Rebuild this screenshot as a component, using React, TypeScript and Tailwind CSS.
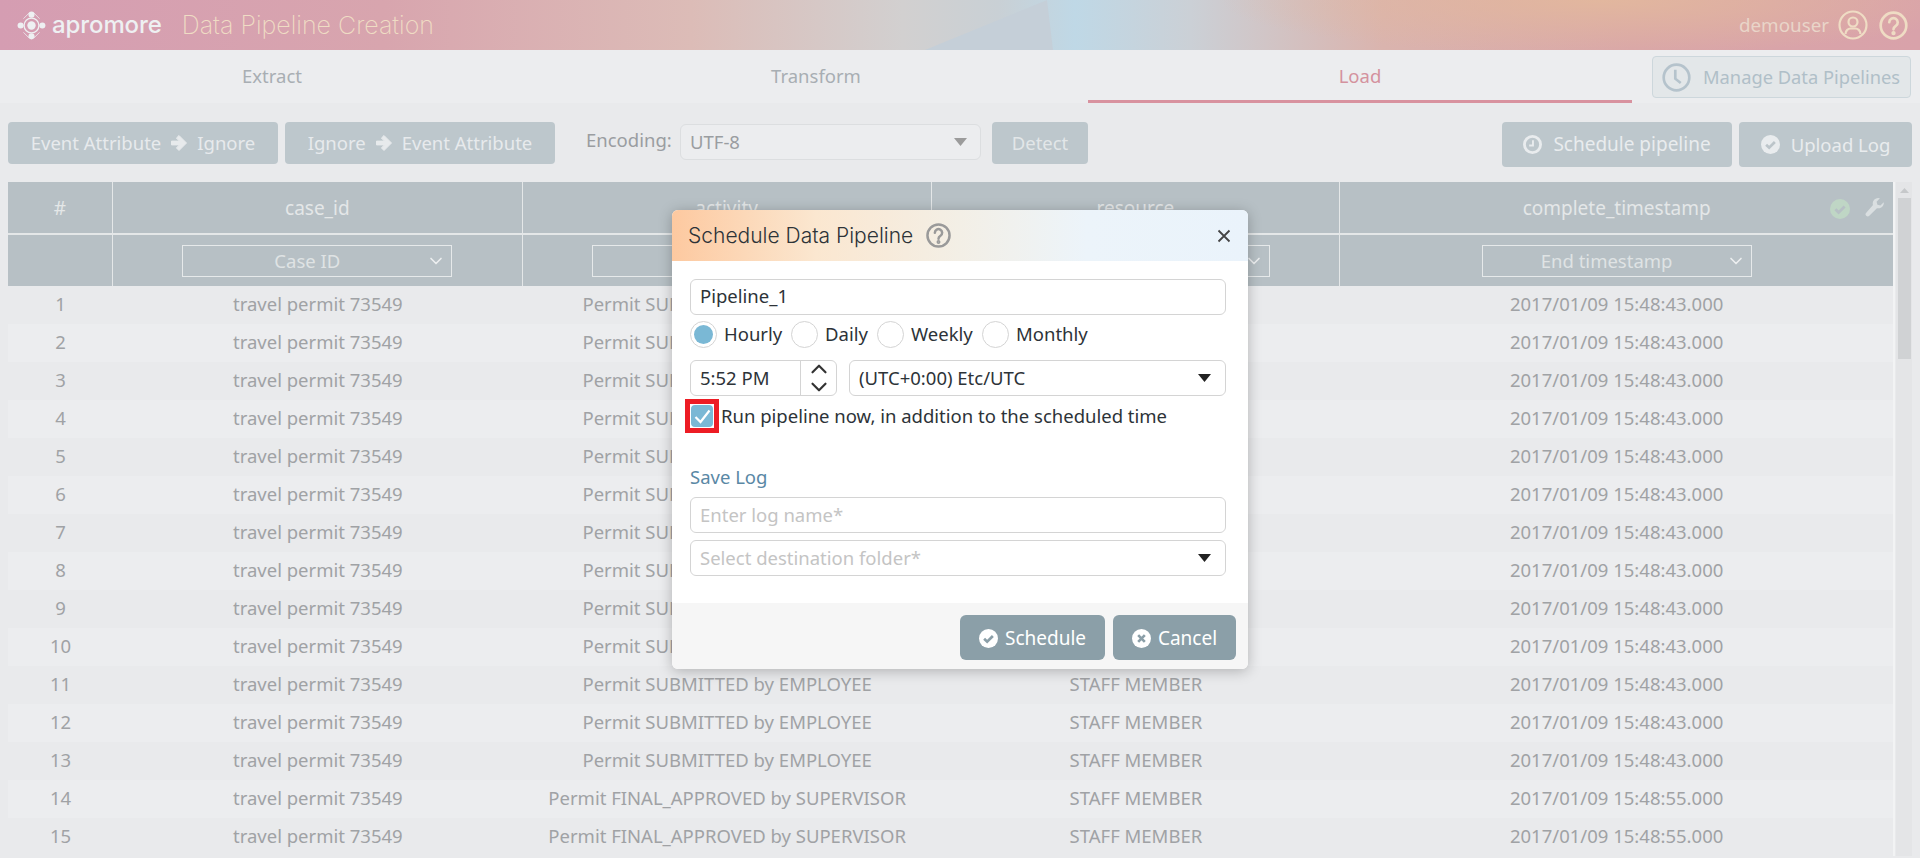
import React from "react";
import { ChevronDown, ChevronUp } from "lucide-react";

const FONT = "font-['Noto_Sans','Lato',sans-serif]";

function CircleCheck({ size = 18, check = "#bcc5ca", fill = "currentColor" }: { size?: number; check?: string; fill?: string }) {
  return (
    <svg width={size} height={size} viewBox="0 0 20 20" className="shrink-0">
      <circle cx="10" cy="10" r="10" fill={fill} />
      <path d="M5.400 10.200l3.200 3.200 6-6" fill="none" stroke={check} strokeWidth="2.800" />
    </svg>
  );
}

function Arrow() {
  return (
    <svg width="20" height="20" viewBox="0 0 20 20" className="shrink-0 mx-2">
      <path d="M10 2.500l7.500 7.500-7.500 7.500-2.600-2.600 3-3H2.500V8.100h7.900l-3-3z" fill="#e7eaec" stroke="#e7eaec" strokeLinejoin="round" />
    </svg>
  );
}

function Logo() {
  return (
    <svg width="37" height="37" viewBox="0 0 46 46" className="shrink-0">
      <g fill="#eef0f2">
        <circle cx="23" cy="23" r="5.200" />
        <circle cx="23" cy="9.500" r="3.800" />
        <circle cx="23" cy="36.500" r="3.800" />
        <circle cx="9.500" cy="23" r="3.800" />
        <circle cx="36.500" cy="23" r="3.800" />
      </g>
      <circle cx="23" cy="23" r="9.200" fill="none" stroke="#eef0f2" strokeWidth="1.600" />
      <path d="M13 14.500L20 7.500M33 14.500L26 7.500M13 31.500L20 38.500M33 31.500L26 38.500" stroke="#eef0f2" strokeWidth="1" fill="none" />
    </svg>
  );
}

function HelpIcon({ size, color, stroke = 2.2 }: { size: number; color: string; stroke?: number }) {
  return (
    <svg width={size} height={size} viewBox="0 0 24 24" fill="none" stroke={color} strokeWidth={stroke} className="shrink-0">
      <circle cx="12" cy="12" r="10.600" />
      <path d="M8.500 9.300a3.500 3.500 0 1 1 5.400 3c-1.200.8-1.900 1.400-1.900 2.900" strokeLinecap="round" />
      <circle cx="12" cy="18.300" r="0.700" fill={color} />
    </svg>
  );
}

function UserIcon() {
  return (
    <svg width="30" height="30" viewBox="0 0 30 30" fill="none" stroke="#efdcc4" strokeWidth="2.200" className="shrink-0">
      <circle cx="15" cy="15" r="13.500" />
      <circle cx="15" cy="12" r="4.500" />
      <path d="M7.500 24c0-3.800 3-5.500 5-5.500h5c2 0 5 1.700 5 5.500" />
    </svg>
  );
}

function Caret({ color = "#222" }: { color?: string }) {
  return (
    <svg width="13" height="8" viewBox="0 0 13 8" className="shrink-0">
      <path d="M0 0h13L6.500 8z" fill={color} />
    </svg>
  );
}

function HeadSelect({ label }: { label: string }) {
  return (
    <div className="relative flex h-8 w-[270px] items-center justify-center border border-[#e6e9ea] pr-5 text-[18.500px] text-[#dfe3e4]">
      {label}
      <ChevronDown size={20} strokeWidth={2} className="absolute right-[5px] top-[5px] text-[#eceeef]" />
    </div>
  );
}

const cols = ["w-[105px]", "w-[410px]", "w-[409px]", "w-[409px]", "w-[553px]"];

const rows = Array.from({ length: 15 }, (_, i) => ({
  n: i + 1,
  activity: i < 13 ? "Permit SUBMITTED by EMPLOYEE" : "Permit FINAL_APPROVED by SUPERVISOR",
  time: i < 13 ? "2017/01/09 15:48:43.000" : "2017/01/09 15:48:55.000",
}));

function Radio({ label, on, width }: { label: string; on?: boolean; width: string }) {
  return (
    <label className={`flex items-center gap-[7px] ${width}`}>
      <span className="flex h-[27px] w-[27px] shrink-0 items-center justify-center rounded-full border border-[#d4d4d4] bg-white">
        {on && <span className="h-[19px] w-[19px] rounded-full bg-[#7ab8d5]" />}
      </span>
      <span className="text-[18.500px] leading-none">{label}</span>
    </label>
  );
}

export default function App() {
  return (
    <div className={`relative h-[858px] w-[1920px] overflow-hidden bg-[#e9eaec] ${FONT}`}>
      {/* header */}
      <header className="relative flex h-[50px] items-center justify-between overflow-hidden bg-[radial-gradient(ellipse_380px_55px_at_1600px_0px,#e2b79e_0%,rgba(226,183,158,0)_100%),linear-gradient(90deg,#d59db2_0%,#d8a5ae_20%,#dcbcb7_36%,#d2d0d0_47%,#c9d0d5_52%,#bfd8e6_56%,#cbd0d6_62%,#dab4ae_72%,#d9a6a8_85%,#d9a2aa_100%)]">
        <div className="absolute inset-0 bg-[#c5cfd8] [clip-path:polygon(925px_50px,1047px_0px,1053px_50px)]" />
        <div className="relative flex items-center pl-[13px]">
          <Logo />
          <span className="ml-[2px] font-['Inter',sans-serif] text-[24px] font-medium leading-none tracking-[-0.1px] text-[#eef0f2]">apromore</span>
          <span className="ml-[20px] font-['Inter',sans-serif] text-[25px] font-extralight leading-none text-[#efdcc4]">Data Pipeline Creation</span>
        </div>
        <div className="relative flex items-center pr-[12px]">
          <span className="mr-[9px] text-[18.800px] text-[#e9d5c9]">demouser</span>
          <UserIcon />
          <span className="ml-[11px]"><HelpIcon size={29} color="#efdcc4" /></span>
        </div>
      </header>

      {/* tabs */}
      <nav className="flex h-[53px] bg-[#ecedef]">
        <div className="flex w-[544px] items-start justify-center pt-[12px] text-[18.500px] text-[#a8aeb3]">Extract</div>
        <div className="flex w-[544px] items-start justify-center pt-[12px] text-[18.500px] text-[#a8aeb3]">Transform</div>
        <div className="flex w-[544px] items-start justify-center border-b-[3px] border-[#d8929f] pt-[12px] text-[18.500px] text-[#d4929e]">Load</div>
        <button className="ml-[20px] mt-[6px] flex h-[42px] w-[259px] items-center rounded border border-[#cdd7dc] bg-[#e3e7e9] pl-[9px] text-[18.300px] text-[#b0bfc8]">
          <svg width="29" height="29" viewBox="0 0 24 24" fill="none" stroke="#b5c3cc" strokeWidth="2.200" className="shrink-0">
            <circle cx="12" cy="12" r="10.600" />
            <path d="M11 5.500V13l4.500 3.500" />
          </svg>
          <span className="ml-[12px] whitespace-nowrap">Manage Data Pipelines</span>
        </button>
      </nav>

      {/* toolbar */}
      <div className="flex h-[79px] items-start pl-[8px] pr-[8px] pt-[19px]">
        <button className="flex h-[42px] w-[270px] items-center justify-center whitespace-nowrap rounded bg-[#bdc7cc] text-[18.500px] text-[#e7eaec]">
          Event Attribute<Arrow />Ignore
        </button>
        <button className="ml-[7px] flex h-[42px] w-[270px] items-center justify-center whitespace-nowrap rounded bg-[#bdc7cc] text-[18.500px] text-[#e7eaec]">
          Ignore<Arrow />Event Attribute
        </button>
        <span className="ml-[31px] mt-[4px] w-[87px] whitespace-nowrap text-[18.500px] text-[#9a9da1]">Encoding:</span>
        <div className="ml-[7px] mt-[2px] flex h-9 w-[301px] items-center justify-between rounded-md border border-[#dcdee0] bg-[#ecedef] pl-[9px] pr-[13px] text-[18.500px] text-[#9a9da1]">
          UTF-8
          <Caret color="#9b9b9b" />
        </div>
        <button className="ml-[11px] h-[42px] w-[96px] rounded bg-[#bdc7cc] text-[18.500px] text-[#e2e6e8]">Detect</button>
        <button className="ml-auto flex h-[45px] w-[230px] items-center justify-center whitespace-nowrap rounded bg-[#bdc7cc] text-[19px] text-[#e9ecee]">
          <svg width="19" height="19" viewBox="0 0 20 20" className="mr-[11px] shrink-0" fill="none">
            <circle cx="10" cy="10" r="8.500" stroke="#e9ecee" strokeWidth="3" />
            <path d="M10.500 5.500v5.500H6.500" stroke="#e9ecee" strokeWidth="2" />
          </svg>
          Schedule pipeline
        </button>
        <button className="ml-[7px] flex h-[45px] w-[173px] items-center justify-center whitespace-nowrap rounded bg-[#bdc7cc] text-[18.500px] text-[#e9ecee]">
          <span className="mr-[11px] text-[#e9ecee]"><CircleCheck size={19} /></span>
          Upload Log
        </button>
      </div>

      {/* table and scrollbar */}
      <div className="flex pl-[8px]">
        <div className="w-[1887px] border-r-2 border-[#f2f3f4]">
          <div className="flex h-[53px] border-b-2 border-[#e4e7e8] bg-[#b7c0c5] text-[19px] text-[#e4e7e8]">
            <div className={`${cols[0]} flex items-center justify-center border-r border-[#e4e7e8] pt-[2px]`}>#</div>
            <div className={`${cols[1]} flex items-center justify-center border-r border-[#e4e7e8] pt-[2px]`}>case_id</div>
            <div className={`${cols[2]} flex items-center justify-center border-r border-[#e4e7e8] pt-[2px]`}>activity</div>
            <div className={`${cols[3]} flex items-center justify-center border-r border-[#e4e7e8] pt-[2px]`}>resource</div>
            <div className={`${cols[4]} relative flex items-center justify-center pt-[2px]`}>
              complete_timestamp
              <span className="absolute left-[490px] top-[17px]"><CircleCheck size={20} fill="#bfd6c5" check="#b7c0c5" /></span>
              <svg width="20" height="22" viewBox="0 0 24 24" className="absolute right-[8px] top-[14px]" fill="#dadfe1">
                <path d="M22.500 6.200l-4 4-3.600-1-1-3.600 4-4a6.500 6.500 0 0 0-8.300 8.100L1.500 18.800a2.600 2.600 0 0 0 3.700 3.700l9.100-9.100a6.500 6.500 0 0 0 8.200-7.200z" />
              </svg>
            </div>
          </div>
          <div className="flex h-[51px] bg-[#b7c0c5]">
            <div className={`${cols[0]} border-r border-[#e4e7e8]`} />
            <div className={`${cols[1]} flex items-center justify-center border-r border-[#e4e7e8]`}><HeadSelect label="Case ID" /></div>
            <div className={`${cols[2]} flex items-center justify-center border-r border-[#e4e7e8]`}><HeadSelect label="Activity" /></div>
            <div className={`${cols[3]} flex items-center justify-center border-r border-[#e4e7e8]`}><HeadSelect label="Resource" /></div>
            <div className={`${cols[4]} flex items-center justify-center`}><HeadSelect label="End timestamp" /></div>
          </div>
          {rows.map((r) => (
            <div key={r.n} className={`flex h-[38px] items-center pb-[2px] text-[18.500px] text-[#a0a2a5] ${r.n % 2 ? "bg-[#e9eaec]" : "bg-[#ecedef]"}`}>
              <div className={`${cols[0]} text-center`}>{r.n}</div>
              <div className={`${cols[1]} text-center`}>travel permit 73549</div>
              <div className={`${cols[2]} text-center`}>{r.activity}</div>
              <div className={`${cols[3]} text-center`}>STAFF MEMBER</div>
              <div className={`${cols[4]} text-center`}>{r.time}</div>
            </div>
          ))}
        </div>
        <div className="ml-[1px] flex w-[16px] flex-col items-center bg-[#e4e5e7] pt-[6px]">
          <svg width="9" height="5" viewBox="0 0 9 5"><path d="M4.500 0L9 5H0z" fill="#c6c8ca" /></svg>
          <div className="mt-[5px] h-[161px] w-[13px] bg-[#d0d2d4]" />
        </div>
      </div>

      {/* dialog */}
      <div className="absolute left-[672px] top-[210px] h-[459px] w-[576px] overflow-hidden rounded-md bg-white text-[#2d3338] shadow-[0_2px_14px_rgba(0,0,0,0.25)]">
        <div className="flex h-[51px] items-center bg-[linear-gradient(90deg,#fdc9a0_0%,#fbe7d0_25%,#f3efe6_50%,#ecf4fa_72%,#eaf3fb_100%)] pl-[16px] pr-[14px]">
          <span className="font-['Inter',sans-serif] text-[21px] font-light leading-none">Schedule Data Pipeline</span>
          <span className="ml-[13px]"><HelpIcon size={25} color="#9a9a9a" stroke={2.400} /></span>
          <svg width="14" height="14" viewBox="0 0 14 14" className="ml-auto mr-[3px]" stroke="#444" strokeWidth="1.800">
            <path d="M1.500 1.500l11 11M12.500 1.500l-11 11" />
          </svg>
        </div>
        <div className="flex flex-col pl-[18px] pr-[22px] pt-[18px]">
          <div className="flex h-9 items-center rounded-md border border-[#d4d4d4] pb-[2px] pl-[9px] text-[18.500px]">Pipeline_1</div>
          <div className="mt-[6px] flex h-[27px]">
            <Radio label="Hourly" on width="w-[101px]" />
            <Radio label="Daily" width="w-[86px]" />
            <Radio label="Weekly" width="w-[105px]" />
            <Radio label="Monthly" width="w-[110px]" />
          </div>
          <div className="mt-[12px] flex h-9 gap-[12px]">
            <div className="flex h-9 w-[147px] rounded-md border border-[#d4d4d4]">
              <div className="flex w-[110px] items-center border-r border-[#d4d4d4] pl-[9px] text-[18.500px]">5:52 PM</div>
              <div className="flex flex-1 flex-col items-center justify-center text-[#333]">
                <ChevronUp size={26} strokeWidth={2} className="-mb-[4px] shrink-0" />
                <ChevronDown size={26} strokeWidth={2} className="-mt-[4px] shrink-0" />
              </div>
            </div>
            <div className="flex flex-1 items-center justify-between rounded-md border border-[#d4d4d4] pl-[9px] pr-[14px] text-[18.500px]">
              (UTC+0:00) Etc/UTC
              <Caret />
            </div>
          </div>
          <div className="mt-[3px] flex h-[34px] items-center">
            <span className="relative -ml-[5px] flex h-[34px] w-[34px] shrink-0 items-center justify-center border-[5px] border-[#ed1c24]">
              <span className="flex h-[22px] w-[22px] items-center justify-center rounded bg-[#7ab8d5]">
                <svg width="17" height="15" viewBox="0 0 17 15" fill="none" stroke="#fff" strokeWidth="2.200"><path d="M1.500 8l5 5L15.500 1.500" /></svg>
              </span>
            </span>
            <span className="ml-[2px] whitespace-nowrap text-[18.500px] leading-none">Run pipeline now, in addition to the scheduled time</span>
          </div>
          <div className="mt-[32px] text-[18.500px] leading-[24px] text-[#5a88a5]">Save Log</div>
          <div className="mt-[8px] flex h-9 items-center rounded-md border border-[#d4d4d4] pl-[9px] text-[18.500px] text-[#c4c4c4]">Enter log name*</div>
          <div className="mt-[7px] flex h-9 items-center justify-between rounded-md border border-[#d4d4d4] pl-[9px] pr-[14px] text-[18.500px] text-[#c4c4c4]">
            Select destination folder*
            <Caret />
          </div>
        </div>
        <div className="absolute inset-x-0 bottom-0 flex h-[66px] items-start justify-end gap-[8px] bg-[#f6f6f6] pr-[12px] pt-[12px]">
          <button className="flex h-[45px] w-[145px] items-center justify-center gap-[7px] rounded-md bg-[#8b9fa8] pt-[2px] text-[19px] text-white">
            <CircleCheck size={19} check="#8b9fa8" fill="#fff" />Schedule
          </button>
          <button className="flex h-[45px] w-[123px] items-center justify-center gap-[7px] rounded-md bg-[#8b9fa8] pt-[2px] text-[19px] text-white">
            <svg width="19" height="19" viewBox="0 0 20 20" className="shrink-0">
              <circle cx="10" cy="10" r="10" fill="#fff" />
              <path d="M6.500 6.500l7 7M13.500 6.500l-7 7" stroke="#8b9fa8" strokeWidth="2.800" />
            </svg>
            Cancel
          </button>
        </div>
      </div>
    </div>
  );
}
